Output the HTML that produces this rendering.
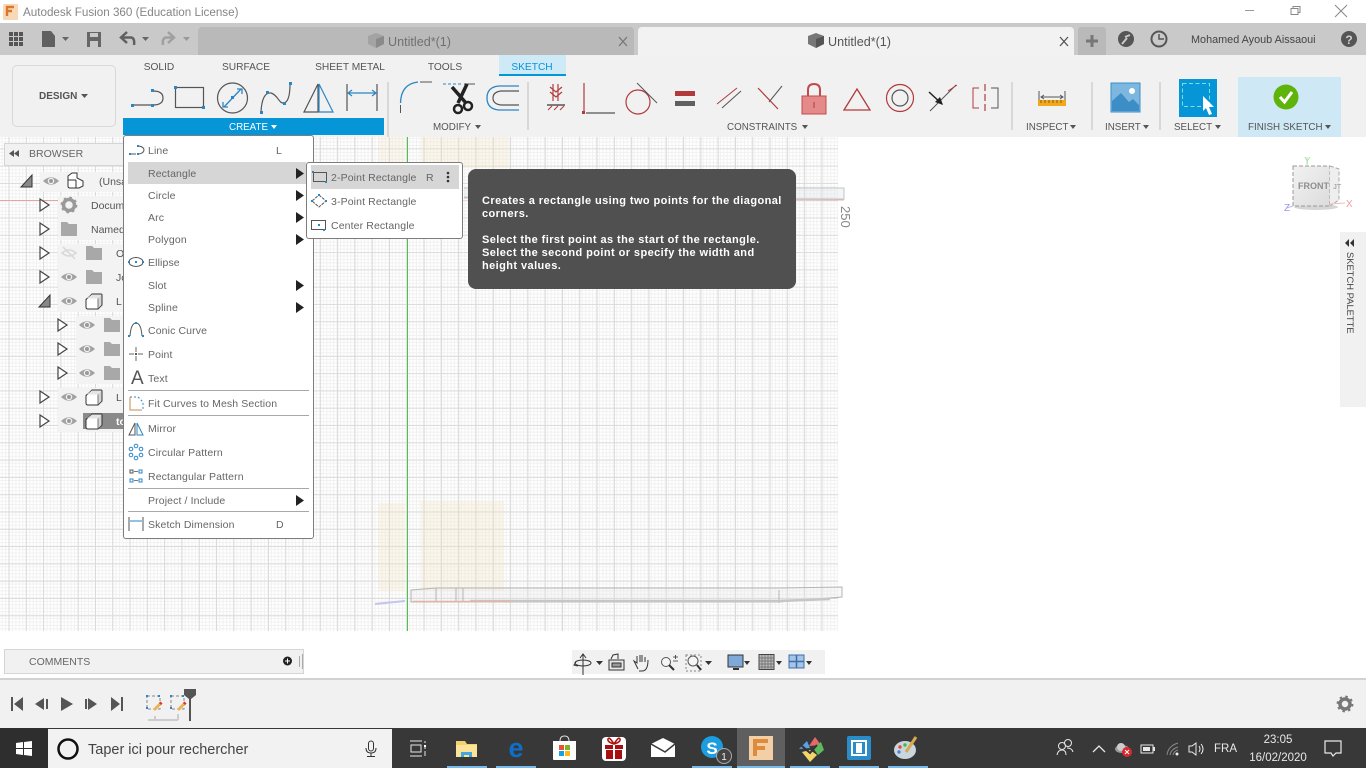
<!DOCTYPE html>
<html><head><meta charset="utf-8"><title>Autodesk Fusion 360</title>
<style>
html,body{margin:0;padding:0;width:1366px;height:768px;overflow:hidden;background:#fff;font-family:"Liberation Sans",sans-serif;color:#555}
.a{position:absolute}
.t{position:absolute;white-space:nowrap;line-height:14px;font-size:10.2px;color:#555;margin-top:1px}
.l{font-size:9.8px}
.m{position:absolute;left:148px;white-space:nowrap;line-height:14px;font-size:10.5px;color:#666;letter-spacing:.12px;margin-top:1px}
.sep{position:absolute;left:128px;width:181px;height:1px;background:#a8a8a8}
.c{transform:translateX(-50%)}
svg{position:absolute;left:0;top:0;overflow:visible}
</style></head><body>
<div class="a" style="left:0;top:0;width:1366px;height:768px;overflow:hidden">

<!-- title bar -->
<div class="a" style="left:0;top:0;width:1366px;height:23px;background:#fff"></div>
<div class="t" style="left:23px;top:5px;font-size:11.65px;color:#858585">Autodesk Fusion 360 (Education License)</div>

<!-- tab strip -->
<div class="a" style="left:0;top:23px;width:1366px;height:32px;background:#c9c9c9"></div>
<div class="a" style="left:198px;top:27px;width:436px;height:28px;background:#b9b9b9;border-radius:4px 4px 0 0"></div>
<div class="a" style="left:638px;top:27px;width:436px;height:28px;background:#f2f2f2;border-radius:4px 4px 0 0"></div>
<div class="a" style="left:1078px;top:27px;width:28px;height:28px;background:#b9b9b9;border-radius:3px 3px 0 0"></div>
<div class="t" style="left:388px;top:34px;font-size:12.6px;color:#707070">Untitled*(1)</div>
<div class="t" style="left:828px;top:34px;font-size:12.6px;color:#555">Untitled*(1)</div>
<div class="t" style="left:1191px;top:32px;font-size:10.85px;color:#444">Mohamed Ayoub Aissaoui</div>

<!-- toolbar -->
<div class="a" style="left:0;top:55px;width:1366px;height:82px;background:#f1f1f1"></div>
<div class="a" style="left:12px;top:65px;width:102px;height:60px;background:#f1f1f1;border:1px solid #d8d8d8;border-radius:5px"></div>
<div class="t" style="left:39px;top:89px;font-weight:bold;font-size:10px;color:#555">DESIGN</div>
<div class="a" style="left:499px;top:55px;width:67px;height:19px;background:#cfeaf7"></div>
<div class="a" style="left:499px;top:74px;width:67px;height:2px;background:#0696d7"></div>
<div class="t c" style="left:159px;top:60px">SOLID</div>
<div class="t c" style="left:246px;top:60px">SURFACE</div>
<div class="t c" style="left:350px;top:60px">SHEET METAL</div>
<div class="t c" style="left:445px;top:60px">TOOLS</div>
<div class="t c" style="left:532px;top:60px;color:#0696d7">SKETCH</div>
<div class="a" style="left:123px;top:118px;width:261px;height:17px;background:#0696d7"></div>
<div class="a" style="left:1238px;top:77px;width:103px;height:60px;background:#cfe8f5"></div>
<div class="t l" style="left:229px;top:120px;color:#fff">CREATE</div>
<div class="t l" style="left:433px;top:120px">MODIFY</div>
<div class="t l" style="left:727px;top:120px">CONSTRAINTS</div>
<div class="t l" style="left:1026px;top:120px">INSPECT</div>
<div class="t l" style="left:1105px;top:120px">INSERT</div>
<div class="t l" style="left:1174px;top:120px">SELECT</div>
<div class="t l" style="left:1248px;top:120px">FINISH SKETCH</div>

<!-- canvas -->
<div class="a" style="left:0;top:137px;width:838px;height:494px;background-color:#fff;
background-image:linear-gradient(90deg,#d9d9d9 1px,transparent 1px),linear-gradient(#dcdcdc 1px,transparent 1px),linear-gradient(90deg,#f1f1f1 1px,transparent 1px),linear-gradient(#f1f1f1 1px,transparent 1px);
background-size:17.3px 17.3px,17.3px 17.3px,3.46px 3.46px,3.46px 3.46px;background-position:8.5px 0,0 11.3px,1.6px 0,0 1.1px"></div>
<div class="a" style="left:378px;top:503px;width:27px;height:88px;background:rgba(245,225,190,.28)"></div>
<div class="a" style="left:421px;top:501px;width:83px;height:90px;background:rgba(245,225,190,.28)"></div>
<div class="a" style="left:378px;top:137px;width:27px;height:31px;background:rgba(245,225,190,.25)"></div>
<div class="a" style="left:421px;top:137px;width:88px;height:31px;background:rgba(245,225,190,.28)"></div>
<div class="a" style="left:0;top:200px;width:124px;height:1px;background:#e6a5a5"></div>
<div class="t" style="left:833px;top:210px;font-size:13px;color:#888;transform:rotate(90deg);transform-origin:12px 7px">250</div>

<svg width="1366" height="768" viewBox="0 0 1366 768" fill="none">
<!-- green axis -->
<rect x="407" y="137" width="1" height="494" fill="#4cc44c"/>
<!-- upper model -->
<g stroke="#c4c4c4" stroke-width="1"><path d="M464 188H844V199L464 197" fill="rgba(215,225,230,.3)"/><path d="M795 189V198"/></g>
<path d="M464 198L844 200" stroke="#e3b4b4"/>
<!-- lower model -->
<g stroke="#b4b4b4" stroke-width="1">
<path d="M411 590L436 588H779L842 587V597L779 602H411Z" fill="rgba(228,228,228,.25)"/>
<path d="M436 588V602M456 588V602M463 588V602M779 590V603"/>
</g>
<path d="M470 601H778L830 599" stroke="#c6c6c6" stroke-width="2.500"/>
<path d="M413 601.500H510" stroke="#e3b3aa" stroke-width="1.500"/>
<path d="M375 604L405 601" stroke="#c3c3ef" stroke-width="2"/>

<!-- title icon -->
<rect x="3" y="4" width="15" height="16" rx="1" fill="#f7d9b8"/>
<path d="M7 16V7H14M7 11H12" stroke="#d9782d" stroke-width="2.400"/>
<!-- window controls -->
<path d="M1245 10.500H1254" stroke="#999"/>
<path d="M1291 8.500H1298V14.500H1291ZM1293 8V6.500H1300V12.500H1298" stroke="#888"/>
<path d="M1335 5L1347 17M1347 5L1335 17" stroke="#888"/>
<!-- qat -->
<g fill="#555"><rect x="9" y="32" width="4" height="4"/><rect x="14" y="32" width="4" height="4"/><rect x="19" y="32" width="4" height="4"/><rect x="9" y="37" width="4" height="4"/><rect x="14" y="37" width="4" height="4"/><rect x="19" y="37" width="4" height="4"/><rect x="9" y="42" width="4" height="4"/><rect x="14" y="42" width="4" height="4"/><rect x="19" y="42" width="4" height="4"/></g>
<path d="M42 31H51L55 36V47H42Z" fill="#606060"/><path d="M62 37H69L65.500 41Z" fill="#666"/>
<path d="M87 32H101V47H87Z" fill="#666"/><rect x="90" y="33" width="8" height="4" fill="#c9c9c9"/><rect x="90" y="41" width="8" height="6" fill="#c9c9c9"/>
<path d="M127 32L121 37.500L127 43M122 37.500H131Q135 38 134 45" stroke="#606060" stroke-width="2.500"/><path d="M142 37H149L145.500 41Z" fill="#666"/>
<path d="M168 32L174 37.500L168 43M173 37.500H166Q162 38 163 45" stroke="#a0a0a0" stroke-width="2.500"/><path d="M183 37H190L186.500 41Z" fill="#999"/>
<!-- tab icons -->
<path d="M368 36L376 33L384 36V44L376 48L368 44Z" fill="#a3a3a3"/><path d="M376 39L384 36V44L376 48Z" fill="#8a8a8a"/>
<path d="M808 36L816 33L824 36V44L816 48L808 44Z" fill="#777"/><path d="M816 39L824 36V44L816 48Z" fill="#555"/>
<path d="M619 37L627 46M627 37L619 46" stroke="#777" stroke-width="1.300"/>
<path d="M1060 37L1068 46M1068 37L1060 46" stroke="#555" stroke-width="1.300"/>
<path d="M1092 35V47M1086 41H1098" stroke="#777" stroke-width="3"/>
<circle cx="1126" cy="39" r="8" fill="#555"/><path d="M1122 44L1127 38M1125 37L1130 35" stroke="#c9c9c9" stroke-width="2"/>
<circle cx="1159" cy="39" r="7.500" fill="#c9c9c9" stroke="#555" stroke-width="2"/><path d="M1159 34V39H1164" stroke="#555" stroke-width="1.500"/>
<circle cx="1349" cy="39" r="8" fill="#555"/>
<text x="1349" y="44" font-family="Liberation Sans" font-size="12" font-weight="bold" fill="#d0d0d0" text-anchor="middle">?</text>
<!-- design caret and label carets -->
<path d="M81 94H88L84.500 98Z" fill="#555"/>
<path d="M271 125H277L274 129Z" fill="#fff"/>
<path d="M475 125H481L478 129Z" fill="#555"/><path d="M802 125H808L805 129Z" fill="#555"/>
<path d="M1070 125H1076L1073 129Z" fill="#555"/><path d="M1143 125H1149L1146 129Z" fill="#555"/>
<path d="M1215 125H1221L1218 129Z" fill="#555"/><path d="M1325 125H1331L1328 129Z" fill="#555"/>

<!-- create icons -->
<path d="M133 105H152" stroke="#555" stroke-width="1.200"/><path d="M153 91Q163 91 163 98T153 105" stroke="#555" stroke-width="1.200"/>
<g fill="#2b86c5"><rect x="131" y="104" width="3" height="3"/><rect x="151" y="104" width="3" height="3"/><rect x="151" y="89" width="3" height="3"/></g>
<rect x="175.500" y="87.500" width="28" height="20" stroke="#555" stroke-width="1.200"/>
<g fill="#2b86c5"><rect x="174" y="86" width="3" height="3"/><rect x="202" y="106" width="3" height="3"/></g>
<circle cx="232.500" cy="98" r="15" stroke="#555" stroke-width="1.200"/>
<path d="M224 107L241 89M237 89H242V94M223 102V107H228" stroke="#2b86c5" stroke-width="1.300"/><rect x="231" y="96" width="3" height="3" fill="#2b86c5"/>
<path d="M261 112Q262 92 271 93C278 95 279 104 284 103C288 102 290 95 290 84" stroke="#555" stroke-width="1.200"/>
<g fill="#2b86c5"><rect x="260" y="111" width="3" height="3"/><rect x="266" y="91" width="3" height="3"/><rect x="283" y="102" width="3" height="3"/><rect x="289" y="82" width="3" height="3"/></g>
<path d="M304 112L318 84V112Z" stroke="#555" stroke-width="1.200"/><path d="M319 84L333 112H319Z" stroke="#2b86c5" stroke-width="1.200"/>
<path d="M347 84V111M377 84V111" stroke="#555" stroke-width="1.200"/><path d="M349 93H375M352 90L348 93L352 96M372 90L376 93L372 96" stroke="#2b86c5" stroke-width="1.200"/>
<path d="M388 82V137" stroke="#d8d8d8" stroke-width="2"/>

<!-- modify icons -->
<path d="M400.500 103Q401 84 418 82" stroke="#2b86c5" stroke-width="1.300"/><path d="M420 82H432M400.500 105V113" stroke="#555" stroke-width="1"/>
<path d="M443 84H462" stroke="#2b86c5" stroke-width="1" stroke-dasharray="3 2"/><path d="M464 84H475" stroke="#555"/>
<path d="M452 87L466 103M467 84L458 103" stroke="#222" stroke-width="3.500"/>
<circle cx="458" cy="109" r="4" stroke="#222" stroke-width="2.500"/><circle cx="468" cy="106" r="4" stroke="#222" stroke-width="2.500"/>
<path d="M519 86H499Q487 87 487 98T499 110H519" stroke="#2b86c5" stroke-width="1.300"/>
<path d="M519 91H501Q493 92 493 98T501 105H519" stroke="#555" stroke-width="1.200"/>
<path d="M528 82V130" stroke="#d8d8d8" stroke-width="2"/>

<!-- constraints -->
<path d="M553 84V101M558 84V101M550 87L556 92L562 87M550 92L556 97L562 92" stroke="#b23a3a" stroke-width="1.200"/>
<path d="M547 105H565" stroke="#555" stroke-width="1.500"/><path d="M548 110L552 106M554 110L558 106M560 110L564 106" stroke="#b23a3a"/>
<path d="M584 83V113" stroke="#b23a3a" stroke-width="1.200"/><rect x="582" y="111" width="3" height="3" fill="#b23a3a"/><path d="M586 113H615" stroke="#555" stroke-width="1.200"/>
<circle cx="638" cy="102" r="12" stroke="#b23a3a" stroke-width="1.200"/><path d="M637 83L657 103" stroke="#555"/>
<rect x="675" y="91" width="20" height="5" fill="#b23a3a"/><rect x="675" y="101" width="20" height="5" fill="#606060"/>
<path d="M717 104L737 88" stroke="#b23a3a" stroke-width="1"/><path d="M722 108L741 91" stroke="#555"/>
<path d="M758 88L778 109" stroke="#b23a3a" stroke-width="1.200"/><path d="M782 86L769 102" stroke="#555"/>
<path d="M808 97V90Q808 84 814 84T820 90V97" stroke="#c34a4a" stroke-width="2"/><rect x="802" y="96" width="24" height="18" fill="#e58a8a" stroke="#c34a4a"/><path d="M814 102V108" stroke="#b23a3a"/>
<path d="M857 89L870 110H844Z" stroke="#b23a3a" stroke-width="1.300"/>
<circle cx="900" cy="98" r="13.500" stroke="#b23a3a" stroke-width="1.200"/><circle cx="900" cy="98" r="8" stroke="#555" stroke-width="1.200"/>
<path d="M956 85L930 111" stroke="#555"/><path d="M948 91L957 85" stroke="#b23a3a"/><path d="M929 92L942 104" stroke="#222" stroke-width="1.500"/><path d="M943 105L935 102L940 97Z" fill="#222"/>
<path d="M979 88H973V108H979" stroke="#b23a3a" stroke-width="1"/><path d="M985 84V112" stroke="#b23a3a" stroke-width="1.200" stroke-dasharray="7 3"/><path d="M991 88H998V108H991" stroke="#555"/>
<path d="M1012 82V130M1092 82V130M1160 82V130" stroke="#d8d8d8" stroke-width="2"/>

<!-- inspect -->
<path d="M1039 91V106M1065 91V106M1041 97H1063M1044 95L1041 97L1044 99M1060 95L1063 97L1060 99" stroke="#555"/>
<rect x="1038" y="100" width="28" height="6" fill="#f2a81d"/>
<path d="M1041 100V103M1045 100V103M1049 100V103M1053 100V103M1057 100V103M1061 100V103" stroke="#8a5a10"/>
<!-- insert -->
<rect x="1111" y="83" width="29" height="29" fill="#7db7e0" stroke="#3d8ec7"/><path d="M1112 111V101L1121 93L1129 102L1133 99L1139 105V111Z" fill="#3d8ec7"/><circle cx="1132" cy="91" r="3" fill="#fff"/>
<!-- select -->
<rect x="1179" y="79" width="38" height="38" fill="#0696d7"/><rect x="1182.500" y="83.500" width="27" height="23" stroke="#7fe0d8" stroke-dasharray="4 2.500"/>
<path d="M1203 96V111L1206 108L1209 115L1212 114L1209 107H1214Z" fill="#fff"/>
<!-- finish -->
<circle cx="1286" cy="97" r="12.500" fill="#5fb40c"/><path d="M1280 97L1284.500 102L1292 92" stroke="#fff" stroke-width="3"/>
</svg>

<!-- browser panel -->
<div class="a" style="left:4px;top:143px;width:125px;height:21px;background:#f1f1f1;border:1px solid #d5d5d5"></div>
<div class="t" style="left:29px;top:146px;color:#666;font-size:10.5px">BROWSER</div>
<div class="a" style="left:40px;top:172px;width:84px;height:20px;background:#f3f3f3"></div>
<div class="a" style="left:58px;top:196px;width:66px;height:44px;background:#f3f3f3"></div>
<div class="a" style="left:58px;top:244px;width:66px;height:68px;background:#f3f3f3"></div>
<div class="a" style="left:76px;top:316px;width:48px;height:68px;background:#f3f3f3"></div>
<div class="a" style="left:58px;top:388px;width:66px;height:44px;background:#f3f3f3"></div>
<div class="a" style="left:83px;top:413px;width:41px;height:16px;background:#8a8a8a"></div>
<div class="t" style="left:99px;top:174px;font-size:10.5px">(Unsa</div>
<div class="t" style="left:91px;top:198px;font-size:10.5px">Docum</div>
<div class="t" style="left:91px;top:222px;font-size:10.5px">Named</div>
<div class="t" style="left:116px;top:246px;font-size:10.5px">O</div>
<div class="t" style="left:116px;top:270px;font-size:10.5px">Jo</div>
<div class="t" style="left:116px;top:294px;font-size:10.5px">L</div>
<div class="t" style="left:116px;top:390px;font-size:10.5px">L</div>
<div class="t" style="left:116px;top:414px;color:#fff;font-weight:bold;font-size:10.5px">to</div>

<svg width="1366" height="768" viewBox="0 0 1366 768" fill="none">
<path d="M14 150L9 153.500L14 157ZM19 150L14 153.500L19 157Z" fill="#555"/>
<defs>
<g id="tr"><path d="M0 -6L9 0L0 6Z" fill="#fff" stroke="#444" stroke-width="1.200"/></g>
<g id="td"><path d="M0 6H11V-6Z" fill="#888" stroke="#333" stroke-width="1"/></g>
<g id="eye"><path d="M-8 0Q0 -7.500 8 0Q0 7.500 -8 0Z" fill="#a2a2a2"/><circle r="3.200" fill="#f3f3f3"/><circle r="2" fill="#999"/></g>
<g id="fo"><path d="M-8 -7H-2L0 -5H8V7H-8Z" fill="#a8a8a8"/></g>
<g id="cube"><path d="M-6 -3L-2 -7H7Q8 -7 8 -6V4L4 8H-6Q-8 8 -8 6V-1Q-8 -2 -6 -3Z" fill="#fff" stroke="#333"/><path d="M-7 -2.500H4L7.500 -6.500L-2 -6.500Z" fill="#e4e4e4"/><path d="M4 -2.500L7.500 -6.500V4L4 7.500Z" fill="#d4d4d4"/><path d="M4 -2.500V7.500" stroke="#777"/></g>
</defs>
<use href="#td" x="21" y="181"/><use href="#eye" x="51" y="181"/>
<path d="M68 176L72 173H77V178L83 181V186L79 188H70Q68 188 68 186Z" fill="#fff" stroke="#333"/><path d="M76 180V188M68 180H76" stroke="#333"/>
<use href="#tr" x="40" y="205"/><circle cx="69" cy="205" r="5.500" stroke="#999" stroke-width="3.500"/><circle cx="69" cy="205" r="7.500" stroke="#999" stroke-width="1.800" stroke-dasharray="2.500 3.400"/>
<use href="#tr" x="40" y="229"/><use href="#fo" x="69" y="229"/>
<use href="#tr" x="40" y="253"/><path d="M62 253Q69 247 76 253Q69 259 62 253ZM63 247L75 259" stroke="#d8d8d8" stroke-width="1.500"/><use href="#fo" x="94" y="253"/>
<use href="#tr" x="40" y="277"/><use href="#eye" x="69" y="277"/><use href="#fo" x="94" y="277"/>
<use href="#td" x="39" y="301"/><use href="#eye" x="69" y="301"/><use href="#cube" x="94" y="301"/>
<use href="#tr" x="58" y="325"/><use href="#eye" x="87" y="325"/><use href="#fo" x="112" y="325"/>
<use href="#tr" x="58" y="349"/><use href="#eye" x="87" y="349"/><use href="#fo" x="112" y="349"/>
<use href="#tr" x="58" y="373"/><use href="#eye" x="87" y="373"/><use href="#fo" x="112" y="373"/>
<use href="#tr" x="40" y="397"/><use href="#eye" x="69" y="397"/><use href="#cube" x="94" y="397"/>
<use href="#tr" x="40" y="421"/><use href="#eye" x="69" y="421"/><use href="#cube" x="94" y="421"/>
</svg>

<!-- create menu -->
<div class="a" style="left:123px;top:135px;width:189px;height:402px;background:#fff;border:1px solid #7d7d7d;border-radius:3px;box-sizing:content-box"></div>
<div class="a" style="left:128px;top:162px;width:178px;height:22px;background:#d6d6d6"></div>
<div class="m" style="top:143px">Line</div>
<div class="m" style="top:166px">Rectangle</div>
<div class="m" style="top:188px">Circle</div>
<div class="m" style="top:210px">Arc</div>
<div class="m" style="top:232px">Polygon</div>
<div class="m" style="top:255px">Ellipse</div>
<div class="m" style="top:278px">Slot</div>
<div class="m" style="top:300px">Spline</div>
<div class="m" style="top:323px">Conic Curve</div>
<div class="m" style="top:347px">Point</div>
<div class="m" style="top:371px">Text</div>
<div class="m" style="top:396px">Fit Curves to Mesh Section</div>
<div class="m" style="top:421px">Mirror</div>
<div class="m" style="top:445px">Circular Pattern</div>
<div class="m" style="top:469px">Rectangular Pattern</div>
<div class="m" style="top:493px">Project / Include</div>
<div class="m" style="top:517px">Sketch Dimension</div>
<div class="m" style="top:143px;left:276px">L</div>
<div class="m" style="top:517px;left:276px">D</div>
<div class="sep" style="top:390px"></div>
<div class="sep" style="top:415px"></div>
<div class="sep" style="top:488px"></div>
<div class="sep" style="top:511px"></div>
<div class="t" style="left:131px;top:368px;font-size:19px;line-height:20px;color:#555">A</div>

<!-- sub menu -->
<div class="a" style="left:306px;top:162px;width:155px;height:75px;background:#fff;border:1px solid #7d7d7d;border-radius:3px"></div>
<div class="a" style="left:311px;top:165px;width:148px;height:24px;background:#d6d6d6"></div>
<div class="m" style="left:331px;top:170px">2-Point Rectangle</div>
<div class="m" style="left:331px;top:194px">3-Point Rectangle</div>
<div class="m" style="left:331px;top:218px">Center Rectangle</div>
<div class="m" style="left:426px;top:170px">R</div>

<svg width="1366" height="768" viewBox="0 0 1366 768" fill="none">
<g fill="#222"><path d="M296 168L304 173.500L296 179Z"/><path d="M296 190L304 195.500L296 201Z"/><path d="M296 212L304 217.500L296 223Z"/><path d="M296 234L304 239.500L296 245Z"/><path d="M296 280L304 285.500L296 291Z"/><path d="M296 302L304 307.500L296 313Z"/><path d="M296 495L304 500.500L296 506Z"/></g>
<!-- menu icons -->
<path d="M130 154H136M139 146Q144 147 144 150T139 154" stroke="#555"/><g fill="#2b86c5"><rect x="129" y="153" width="2" height="2"/><rect x="137" y="153" width="2" height="2"/><rect x="137" y="145" width="2" height="2"/></g>
<ellipse cx="136" cy="262" rx="7" ry="4.500" stroke="#555"/><rect x="135" y="261" width="2" height="2" fill="#2b86c5"/><rect x="128" y="261" width="2" height="2" fill="#2b86c5"/><rect x="142" y="261" width="2" height="2" fill="#2b86c5"/>
<path d="M130 336Q131 323 136 323T142 336" stroke="#555"/><g fill="#2b86c5"><rect x="128" y="335" width="2" height="2"/><rect x="142" y="335" width="2" height="2"/><rect x="135" y="322" width="2" height="2"/></g>
<path d="M129 354H134M138 354H143M136 347V352M136 356V361" stroke="#666"/><rect x="135" y="353" width="2" height="2" fill="#555"/>
<path d="M130 397H138L143 402V410" stroke="#2b86c5" stroke-dasharray="2 2"/><path d="M130 397V410H142" stroke="#c98a4b"/>
<path d="M129 435L135 423V435Z" stroke="#555"/><path d="M137 423L143 435H137Z" stroke="#2b86c5"/>
<g stroke="#2b86c5" fill="#fff"><circle cx="136" cy="446" r="1.800"/><circle cx="141" cy="449" r="1.800"/><circle cx="141" cy="455" r="1.800"/><circle cx="136" cy="458" r="1.800"/><circle cx="131" cy="455" r="1.800"/><circle cx="131" cy="449" r="1.800"/></g>
<g stroke="#2b86c5" fill="#fff"><rect x="130" y="470" width="3" height="3" stroke="#555"/><rect x="139" y="470" width="3" height="3"/><rect x="130" y="479" width="3" height="3"/><rect x="139" y="479" width="3" height="3"/></g><path d="M134 471.500H138M134 480.500H138" stroke="#777"/>
<path d="M129 517V531M143 517V531" stroke="#555"/><path d="M130 521H142" stroke="#2b86c5"/>
<rect x="313.500" y="172.500" width="13" height="9" stroke="#555"/><rect x="312" y="171" width="2" height="2" fill="#2b86c5"/><rect x="325" y="181" width="2" height="2" fill="#2b86c5"/>
<path d="M319 195L326 201L319 207L312 201Z" stroke="#555" stroke-dasharray="3 1"/><g fill="#2b86c5"><rect x="318" y="194" width="2" height="2"/><rect x="311" y="200" width="2" height="2"/><rect x="325" y="200" width="2" height="2"/></g>
<rect x="311.500" y="220.500" width="14" height="9" stroke="#555"/><rect x="318" y="224" width="2" height="2" fill="#2b86c5"/><rect x="323" y="229" width="2" height="2" fill="#2b86c5"/>
<g fill="#333"><circle cx="448" cy="173" r="1.300"/><circle cx="448" cy="177" r="1.300"/><circle cx="448" cy="181" r="1.300"/></g>
</svg>

<!-- tooltip -->
<div class="a" style="left:468px;top:169px;width:328px;height:120px;background:#505050;border-radius:8px"></div>
<div class="t" style="left:482px;top:194px;font-size:11px;font-weight:bold;line-height:13px;color:#fff;letter-spacing:.42px">Creates a rectangle using two points for the diagonal<br>corners.<br><br>Select the first point as the start of the rectangle.<br>Select the second point or specify the width and<br>height values.</div>

<!-- viewcube + palette -->
<div class="a" style="left:1340px;top:232px;width:26px;height:175px;background:#f1f1f1"></div>
<svg width="1366" height="768" viewBox="0 0 1366 768" fill="none">
<defs><linearGradient id="cb" x1="0" y1="0" x2="1" y2="1"><stop offset="0" stop-color="#f2f2f2"/><stop offset="1" stop-color="#dcdcdc"/></linearGradient></defs>
<ellipse cx="1316" cy="207" rx="22" ry="3" fill="#d6d6d6"/>
<rect x="1293" y="166" width="37" height="40" fill="url(#cb)" stroke="#999" stroke-dasharray="4 2"/>
<path d="M1330 166L1339 169V200L1330 206" fill="#eee" stroke="#aaa" stroke-dasharray="4 2"/>
<path d="M1307 165V157" stroke="#b6e6b6"/><path d="M1330 204L1345 203" stroke="#f3bcbc"/><path d="M1293 206L1287 208" stroke="#bcbcef"/>
<text x="1298" y="189" font-family="Liberation Sans" font-size="9" font-weight="bold" fill="#8d8d8d">FRONT</text>
<text x="1333" y="189" font-family="Liberation Sans" font-size="7" font-weight="bold" fill="#aaa">JT</text>
<text x="1304" y="164" font-family="Liberation Sans" font-size="10" fill="#a5e6a5">Y</text>
<text x="1346" y="207" font-family="Liberation Sans" font-size="10" fill="#f29a9a">X</text>
<text x="1284" y="211" font-family="Liberation Sans" font-size="10" fill="#9a9ae6">Z</text>
<path d="M1345 243L1349 239V247ZM1350 243L1354 239V247Z" fill="#333"/>
</svg>
<div class="t" style="left:1343px;top:251px;color:#444;writing-mode:vertical-rl;font-size:9.4px">SKETCH PALETTE</div>

<!-- comments -->
<div class="a" style="left:4px;top:649px;width:298px;height:23px;background:#f1f1f1;border:1px solid #d5d5d5"></div>
<div class="t" style="left:29px;top:654px;color:#666;font-size:10.5px">COMMENTS</div>

<!-- view toolbar -->
<div class="a" style="left:572px;top:650px;width:253px;height:24px;background:#f1f1f1"></div>

<!-- timeline -->
<div class="a" style="left:0;top:678px;width:1366px;height:2px;background:#d2d2d2"></div>
<div class="a" style="left:0;top:680px;width:1366px;height:48px;background:#f1f1f1"></div>

<svg width="1366" height="768" viewBox="0 0 1366 768" fill="none">
<circle cx="287.500" cy="661" r="4.500" fill="#222"/><path d="M285 661H290M287.500 658.500V663.500" stroke="#fff"/>
<path d="M299.500 656V667M302.500 654V669" stroke="#aaa"/>
<!-- view tools -->
<g stroke="#333">
<path d="M583 655V675M580 658L583 654L586 658" stroke-width="1"/><ellipse cx="583" cy="663" rx="8" ry="3"/>
<path d="M576 662L574 665L578 666"/>
</g>
<path d="M596 661H603L599.500 665Z" fill="#333"/>
<rect x="609" y="660" width="15" height="10" stroke="#333" fill="#e8e8e8"/><rect x="612" y="663" width="9" height="4" fill="#999" stroke="#333"/><path d="M611 659L613 655L618 654V659" stroke="#333"/>
<path d="M638 669L634 661L637 663L637 656M640 655V662M642 655V662M645 657V662M648 660Q648 671 642 671H639" stroke="#333"/>
<circle cx="666" cy="662" r="4.500" stroke="#555" fill="#f6f6f6"/><path d="M669 665L674 670" stroke="#333" stroke-width="2"/><path d="M673 657H678M675.500 655V659M673 661H678" stroke="#333" stroke-width=".8"/>
<rect x="686" y="655" width="15" height="16" stroke="#888" stroke-dasharray="2 2"/><circle cx="693" cy="661" r="5" stroke="#555" fill="#f6f6f6"/><path d="M697 665L701 670" stroke="#333" stroke-width="2"/>
<path d="M705 661H712L708.500 665Z" fill="#333"/>
<rect x="728" y="655" width="15" height="12" fill="#7ea9d8" stroke="#333"/><path d="M733 669H739" stroke="#333" stroke-width="2"/>
<path d="M744 661H750L747 665Z" fill="#333"/>
<rect x="759" y="654.500" width="15" height="15" fill="#bbb" stroke="#444"/><path d="M762 655V669M765 655V669M768 655V669M771 655V669M759 658H774M759 661H774M759 664H774M759 667H774" stroke="#666" stroke-width=".7"/>
<path d="M776 661H782L779 665Z" fill="#333"/>
<rect x="789" y="655" width="15" height="13" fill="#a5c4e8" stroke="#3d6ea8"/><path d="M796.500 655V668M789 661.500H804" stroke="#3d6ea8" stroke-width="1.500"/>
<path d="M806 661H812L809 665Z" fill="#333"/>
<!-- timeline controls -->
<g fill="#555">
<rect x="11" y="697" width="2" height="14"/><path d="M23 697L14 704L23 711Z"/>
<path d="M44 698L35 704L44 710Z"/><rect x="46" y="699" width="2" height="10"/>
<path d="M61 697L73 704L61 711Z"/>
<rect x="85" y="699" width="2" height="10"/><path d="M88 698L97 704L88 710Z"/>
<path d="M111 697L120 704L111 711Z"/><rect x="121" y="697" width="2" height="14"/>
</g>
<rect x="147" y="696" width="13" height="13" stroke="#888" stroke-dasharray="3 2"/>
<rect x="171" y="696" width="13" height="13" stroke="#888" stroke-dasharray="3 2"/>
<g fill="#2b86c5"><rect x="146" y="695" width="2" height="2"/><rect x="158" y="695" width="2" height="2"/><rect x="146" y="707" width="2" height="2"/><rect x="170" y="695" width="2" height="2"/><rect x="182" y="695" width="2" height="2"/><rect x="170" y="707" width="2" height="2"/></g>
<path d="M154 710L161 703" stroke="#eab45a" stroke-width="3"/><path d="M178 710L185 703" stroke="#eab45a" stroke-width="3"/>
<path d="M160 704L161.500 702.500M184 704L185.500 702.500" stroke="#d33" stroke-width="3"/>
<path d="M148 720H178M155 716V720M178 714V720" stroke="#ccc" stroke-width="2"/>
<path d="M184 689H196V695L191 699H189L184 695Z" fill="#555"/><rect x="189" y="697" width="2" height="24" fill="#555"/>
<circle cx="1345" cy="704" r="5" stroke="#777" stroke-width="3.500"/><circle cx="1345" cy="704" r="7.500" stroke="#777" stroke-width="1.800" stroke-dasharray="2.500 3.400"/>
</svg>

<!-- taskbar -->
<div class="a" style="left:0;top:728px;width:1366px;height:40px;background:#383838"></div>
<div class="a" style="left:0;top:728px;width:48px;height:40px;background:#2e2e2e"></div>
<div class="a" style="left:48px;top:729px;width:344px;height:39px;background:#f2f2f2"></div>
<div class="t" style="left:88px;top:741px;font-size:14.5px;line-height:16px;color:#444">Taper ici pour rechercher</div>
<div class="a" style="left:737px;top:728px;width:48px;height:40px;background:#5f5f5f"></div>
<div class="t" style="left:1214px;top:741px;font-size:11.5px;color:#e8e8e8">FRA</div>
<div class="t c" style="left:1278px;top:732px;font-size:11.5px;color:#e8e8e8">23:05</div>
<div class="t c" style="left:1278px;top:750px;font-size:11.5px;color:#e8e8e8">16/02/2020</div>

<svg width="1366" height="768" viewBox="0 0 1366 768" fill="none">
<g fill="#fff"><path d="M16 743L23 742V748H16ZM24 742L32 741V748H24ZM16 749H23V755L16 754ZM24 749H32V756L24 755Z"/></g>
<circle cx="68" cy="749" r="9.500" stroke="#111" stroke-width="2.500"/>
<rect x="368.500" y="741" width="5" height="10" rx="2.500" stroke="#333"/><path d="M366 748Q366 753 371 753T376 748M371 753V756M367 756.500H375" stroke="#333"/>
<!-- task view -->
<path d="M410 741H422M411 745H421V752H411ZM410 756H422M425 741V743M425 745V749M425 751V756" stroke="#e8e8e8"/>
<rect x="424" y="745" width="2" height="2" fill="#fff"/>
<!-- explorer -->
<path d="M456 741H465L467 744H477V757H456Z" fill="#f5d06f"/><path d="M456 745H477V757H456Z" fill="#fbe39a"/><path d="M461 757V752H472V757H469V755H464V757Z" fill="#43a6dd"/>
<!-- edge -->
<text x="516" y="757" font-family="Liberation Sans" font-size="27" font-weight="bold" fill="#0d6fc9" text-anchor="middle">e</text>
<!-- store -->
<path d="M553 741H576V759Q576 760 575 760H554Q553 760 553 759Z" fill="#fff"/><path d="M560 741Q560 736 564.500 736T569 741" stroke="#ddd"/>
<rect x="559" y="745" width="5" height="5" fill="#e8542b"/><rect x="565" y="745" width="5" height="5" fill="#7db42f"/><rect x="559" y="751" width="5" height="5" fill="#18a1e6"/><rect x="565" y="751" width="5" height="5" fill="#fbbb10"/>
<!-- gift -->
<rect x="602" y="737" width="24" height="24" rx="4" fill="#fff"/><path d="M605 745H623V749H605ZM606 750H622V759H606Z" fill="#a81010"/><path d="M614 745V759" stroke="#fff" stroke-width="2"/><path d="M614 744Q607 742 608 739T614 744Q621 742 620 739T614 744" stroke="#a81010" stroke-width="1.500"/>
<!-- mail -->
<path d="M651 744L663 738L675 744V757H651Z" fill="#fff"/><path d="M651 744L665 752L675 744" stroke="#383838" stroke-width="1.500"/>
<!-- skype -->
<circle cx="712" cy="747" r="11" fill="#1b9de0"/><text x="712" y="754" font-family="Liberation Sans" font-size="17" font-weight="bold" fill="#fff" text-anchor="middle">S</text>
<circle cx="724" cy="756" r="7.500" fill="#444" stroke="#aaa"/><text x="724" y="760" font-family="Liberation Sans" font-size="10" fill="#eee" text-anchor="middle">1</text>
<!-- fusion -->
<rect x="749" y="736" width="24" height="24" fill="#f4cfa5"/><path d="M755 756V741H768M755 748H765" stroke="#dc8c3c" stroke-width="4"/>
<!-- kraken-like -->
<path d="M810 748L799 749L807 741Z" fill="#5aa0e6"/><path d="M809 746L815 737L821 745Z" fill="#e46a6a"/><path d="M813 748L821 742L824 750L818 755Z" fill="#5eb85e"/><path d="M802 752L810 750L817 755L810 762Z" fill="#f2d66a"/><path d="M802 746L810 753L817 745" stroke="#333" stroke-width="2"/>
<!-- bracket -->
<rect x="847" y="736" width="24" height="24" rx="2" fill="#2a8dc9"/><rect x="852" y="741" width="14" height="14" stroke="#fff" stroke-width="2"/><rect x="856" y="743" width="6" height="10" fill="#fff"/>
<!-- paint -->
<ellipse cx="905" cy="750" rx="11" ry="9" fill="#c9d6de"/><path d="M906 752L916 737" stroke="#d9a84f" stroke-width="3"/>
<circle cx="900" cy="747" r="1.700" fill="#e44"/><circle cx="905" cy="745" r="1.700" fill="#4b4"/><circle cx="899" cy="752" r="1.700" fill="#48d"/>
<!-- underlines -->
<g fill="#76b9ed"><rect x="447" y="766" width="40" height="2"/><rect x="496" y="766" width="40" height="2"/><rect x="692" y="766" width="40" height="2"/><rect x="737" y="766" width="48" height="2"/><rect x="790" y="766" width="40" height="2"/><rect x="839" y="766" width="40" height="2"/><rect x="888" y="766" width="40" height="2"/></g>
<!-- tray -->
<circle cx="1062" cy="746" r="3.500" stroke="#e8e8e8"/><circle cx="1068" cy="743" r="3.500" stroke="#e8e8e8"/><path d="M1057 755Q1058 750 1062 750T1066 755M1067 748Q1072 748 1073 752" stroke="#e8e8e8"/>
<path d="M1093 752L1099 746L1105 752" stroke="#e8e8e8" stroke-width="1.300"/>
<ellipse cx="1122" cy="749" rx="7" ry="4" fill="#999"/><circle cx="1121" cy="747" r="4" fill="#ccc"/><circle cx="1127" cy="752" r="5" fill="#d8282f"/><path d="M1125 750L1129 754M1129 750L1125 754" stroke="#fff"/>
<rect x="1141" y="745" width="12" height="8" stroke="#e8e8e8"/><rect x="1143" y="747" width="7" height="4" fill="#e8e8e8"/><rect x="1153" y="747" width="2" height="4" fill="#e8e8e8"/>
<path d="M1167 755Q1168 746 1178 743M1170 755Q1171 749 1178 747M1173 755Q1174 751 1178 750" stroke="#888"/><circle cx="1177" cy="754" r="1.500" fill="#eee"/>
<path d="M1189 746H1192L1196 743V755L1192 752H1189ZM1199 746Q1201 749 1199 752M1201 744Q1205 749 1201 754" stroke="#e8e8e8"/>
<path d="M1325 741H1341V753H1336L1333 756L1331 753H1325Z" stroke="#e8e8e8" stroke-width="1.200"/>
</svg>
</div>
</body></html>
